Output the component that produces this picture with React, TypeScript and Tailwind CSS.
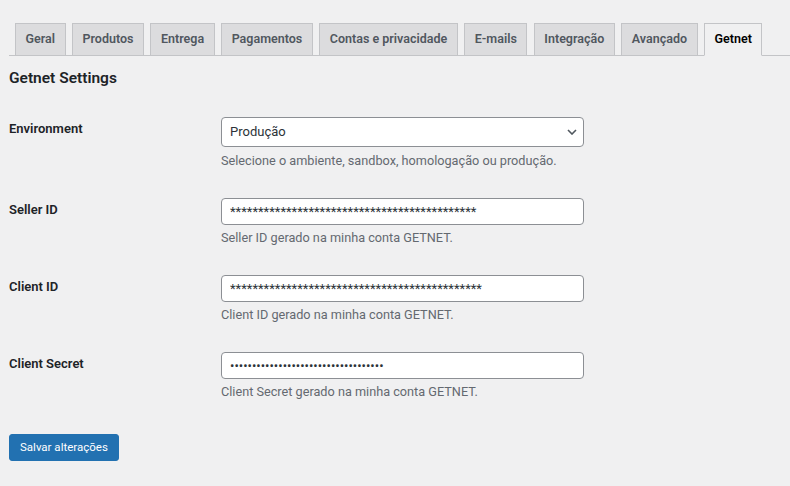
import { useState } from "react";

const tabs = [
  "Geral",
  "Produtos",
  "Entrega",
  "Pagamentos",
  "Contas e privacidade",
  "E-mails",
  "Integração",
  "Avançado",
  "Getnet",
];

const fields = [
  {
    label: "Seller ID",
    value: "*".repeat(44),
    type: "text",
    help: "Seller ID gerado na minha conta GETNET.",
  },
  {
    label: "Client ID",
    value: "*".repeat(45),
    type: "text",
    help: "Client ID gerado na minha conta GETNET.",
  },
  {
    label: "Client Secret",
    value: "x".repeat(35),
    type: "password",
    help: "Client Secret gerado na minha conta GETNET.",
  },
];

export default function App() {
  const [env, setEnv] = useState("producao");

  return (
    <div className="min-h-[486px] bg-[#f0f0f1] font-['Roboto',sans-serif] text-[#1d2327]">
      {/* abas */}
      <nav className="ml-[9px] flex items-end gap-[6.5px] border-b border-[#c3c4c7] pt-[23px]">
        {tabs.map((t) => {
          const active = t === "Getnet";
          return (
            <a
              key={t}
              href="#"
              className={
                "first:ml-[6px] -mb-px flex h-[33px] shrink-0 items-center whitespace-nowrap border px-[9.5px] text-[12.5px] font-semibold " +
                (active
                  ? "border-[#c3c4c7] border-b-[#f0f0f1] bg-[#f0f0f1] text-black"
                  : "border-[#c3c4c7] bg-[#dcdcde] text-[#50575e]")
              }
            >
              {t}
            </a>
          );
        })}
      </nav>

      <div className="px-[9px]">
        <h2 className="mt-[12px] text-[15.5px] font-semibold leading-[20px]">
          Getnet Settings
        </h2>

        {/* Environment */}
        <div className="mt-[29px] flex">
          <label className="w-[212px] shrink-0 pt-[2px] text-[13px] font-semibold leading-[20px]">
            Environment
          </label>
          <div className="w-[363px]">
            <div className="relative">
              <select
                value={env}
                onChange={(e) => setEnv(e.target.value)}
                className="h-[30px] w-full appearance-none rounded-[4px] border border-[#8c8f94] bg-white pl-[8px] pr-[24px] text-[13px] text-[#2c3338] outline-none"
              >
                <option value="sandbox">Sandbox</option>
                <option value="homologacao">Homologação</option>
                <option value="producao">Produção</option>
              </select>
              <svg
                className="pointer-events-none absolute right-[7px] top-[12px]"
                width="10"
                height="6"
                viewBox="0 0 10 6"
                fill="none"
              >
                <path d="M1 1l4 4 4-4" stroke="#50575e" strokeWidth="1.6" />
              </svg>
            </div>
            <p className="mt-[4px] text-[12.7px] leading-[20px] text-[#646970]">
              Selecione o ambiente, sandbox, homologação ou produção.
            </p>
          </div>
        </div>

        {fields.map((f) => (
          <div key={f.label} className="mt-[27px] flex">
            <label className="w-[212px] shrink-0 pt-[2px] text-[13px] font-semibold leading-[20px]">
              {f.label}
            </label>
            <div className="w-[363px]">
              <input
                type={f.type}
                defaultValue={f.value}
                readOnly
                className="h-[27px] w-full rounded-[4px] border border-[#8c8f94] bg-white px-[8px] text-[13px] text-[#2c3338] outline-none"
              />
              <p className="mt-[3px] text-[12.7px] leading-[20px] text-[#646970]">
                {f.help}
              </p>
            </div>
          </div>
        ))}

        <button className="mt-[32px] h-[27px] rounded-[3px] border border-[#2271b1] bg-[#2271b1] px-[10px] text-[11.5px] text-white">
          Salvar alterações
        </button>
      </div>
    </div>
  );
}
